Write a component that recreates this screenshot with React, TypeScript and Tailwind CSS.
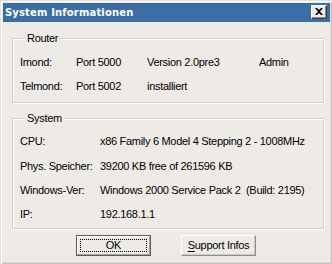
const FONT = { fontFamily: '"Liberation Sans", Arial, sans-serif' };

const Row = ({ cells, cols, className = "" }: { cells: string[]; cols: string; className?: string }) => (
  <div className={`grid h-[14px] items-center leading-[14px] ${cols} ${className}`}>
    {cells.map((c, i) => (
      <span key={i} className="whitespace-pre">
        {c}
      </span>
    ))}
  </div>
);

const GroupBox = ({ title, className = "", children }: { title: string; className?: string; children: React.ReactNode }) => (
  <fieldset
    className={`ml-[9px] w-[312px] border border-[#d2cfc9] shadow-[1px_1px_0_#ffffff,inset_1px_1px_0_#ffffff] pl-[7px] ${className}`}
  >
    <legend className="ml-[5px] bg-[#eeebe6] px-[2px] text-[11px] leading-[14px] tracking-[-0.3px]">
      {title}
    </legend>
    {children}
  </fieldset>
);

export default function App() {
  return (
    <div
      style={FONT}
      className="w-[332px] h-[264px] bg-[#eeebe6] text-black text-[11px] tracking-[-0.3px] pl-[3px] pt-[3px] pr-[2px] shadow-[inset_1px_1px_0_#e4e1dc,inset_2px_2px_0_#ffffff,inset_-1px_-1px_0_#c6c3be,inset_-2px_-2px_0_#dedbd6]"
    >
      {/* title bar */}
      <div className="h-[19px] bg-[#3a6ea5] flex items-start justify-between pl-[2px] pr-[3px]">
        <span
          className="mt-[3px] text-white font-bold text-[10px] leading-[13px] tracking-[0.15px]"
          style={{ fontFamily: '"DejaVu Sans", Verdana, sans-serif' }}
        >
          System Informationen
        </span>
        <button className="mt-[2px] w-[16px] h-[14px] bg-[#eeebe6] border border-t-white border-l-white border-r-[#404040] border-b-[#404040] shadow-[inset_-1px_-1px_0_#8c8983] flex items-center justify-center">
          <svg width="8" height="7" viewBox="0 0 8 7" className="-mt-[1px]">
            <path d="M0 0h2l2 2 2-2h2L5 3.5 8 7H6L4 5 2 7H0l3-3.5z" fill="#000" />
          </svg>
        </button>
      </div>

      <GroupBox title="Router" className="mt-[9px] pt-[10px] pb-[9px]">
        <Row cols="grid-cols-[56px_71px_112px_1fr]" cells={["Imond:", "Port 5000", "Version 2.0pre3", "Admin"]} />
        <Row
          cols="grid-cols-[56px_71px_112px_1fr]"
          className="mt-[10px]"
          cells={["Telmond:", "Port 5002", "installiert", ""]}
        />
      </GroupBox>

      <GroupBox title="System" className="mt-[8px] pt-[9px] pb-[7px]">
        <Row cols="grid-cols-[80px_1fr]" cells={["CPU:", "x86 Family 6 Model 4 Stepping 2 - 1008MHz"]} />
        <Row
          cols="grid-cols-[80px_1fr]"
          className="mt-[11px]"
          cells={["Phys. Speicher:", "39200 KB free of 261596 KB"]}
        />
        <Row
          cols="grid-cols-[80px_1fr]"
          className="mt-[10px]"
          cells={["Windows-Ver:", "Windows 2000 Service Pack 2  (Build: 2195)"]}
        />
        <Row cols="grid-cols-[80px_1fr]" className="mt-[10px]" cells={["IP:", "192.168.1.1"]} />
      </GroupBox>

      {/* buttons */}
      <div className="mt-[6px] flex pl-[73px] gap-[30px]">
        <button className="w-[75px] h-[21px] border border-[#5f5d59] bg-[#eeebe6]">
          <div className="h-full border border-t-white border-l-white border-r-[#a3a09a] border-b-[#a3a09a] p-[2px]">
            <div className="h-full border border-dotted border-black flex items-center justify-center leading-[13px]">
              OK
            </div>
          </div>
        </button>
        <button className="w-[75px] h-[21px] bg-[#eeebe6] border border-t-white border-l-white border-r-[#8f8c86] border-b-[#8f8c86] shadow-[inset_-1px_-1px_0_#cdcac4] flex items-center justify-center leading-[13px] whitespace-pre">
          <span className="underline underline-offset-[2px]">S</span>upport Infos
        </button>
      </div>
    </div>
  );
}
